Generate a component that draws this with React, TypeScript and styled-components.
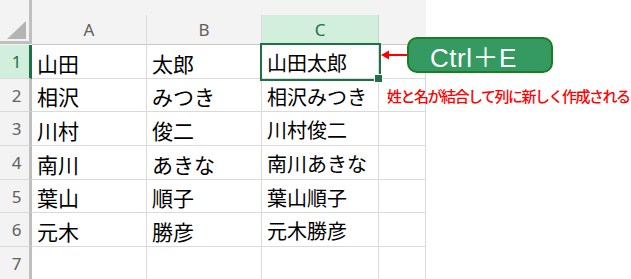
import styled, { createGlobalStyle } from "styled-components";

const GlobalStyle = createGlobalStyle`
    body {
        margin: 0;
        background: #ffffff;
        font-family: "Noto Sans CJK JP", sans-serif;
    }
`

const COLS = "32px 115px 115px 117px 47px"
const GRID = "#dadada"
const HEAD_LINE = "#bfbfbf"
const XL_GREEN = "#1e7145"

const Page = styled.div`
    position: relative;
    width: 631px;
    height: 279px;
    overflow: hidden;
`
const Sheet = styled.div`
    width: 426px;
    display: flex;
    flex-direction: column;
`
const HeaderRow = styled.div`
    display: grid;
    grid-template-columns: ${COLS};
    height: 45px;
    background: #f3f3f3;
`
const Corner = styled.div`
    position: relative;
    box-sizing: border-box;
    border-right: 3px solid ${HEAD_LINE};
    border-bottom: 3px solid ${HEAD_LINE};
    height: 44px;
`
const CornerMark = styled.div`
    position: absolute;
    right: 3px;
    bottom: 2px;
    width: 0;
    height: 0;
    border-left: 19px solid transparent;
    border-bottom: 18px solid #b4b4b4;
`
const ColHeader = styled.div<{ $active?: boolean; $last?: boolean }>`
    align-self: end;
    box-sizing: border-box;
    height: 30px;
    display: flex;
    align-items: center;
    justify-content: center;
    font-family: "Noto Sans", sans-serif;
    font-size: 17px;
    color: ${p => (p.$active ? XL_GREEN : "#5f5f5f")};
    background: ${p => (p.$active ? "#d2eedd" : "transparent")};
    border-right: 1px solid ${p => (p.$last ? "transparent" : p.$active ? "#b6dcc4" : "#dcdcdc")};
    border-bottom: 1px solid #c8c8c8;
`
const Row = styled.div<{ $h: number }>`
    display: grid;
    grid-template-columns: ${COLS};
    height: ${p => p.$h}px;
`
const RowHeader = styled.div<{ $active?: boolean }>`
    box-sizing: border-box;
    display: flex;
    align-items: center;
    justify-content: center;
    padding-left: 4px;
    font-family: "Noto Sans", sans-serif;
    font-size: 17px;
    color: ${p => (p.$active ? XL_GREEN : "#616161")};
    background: ${p => (p.$active ? "#d2eedd" : "#f3f3f3")};
    border-right: 3px solid ${p => (p.$active ? XL_GREEN : HEAD_LINE)};
    border-bottom: 1px solid #dadada;
`
const Cell = styled.div<{ $small?: boolean; $selected?: boolean }>`
    position: relative;
    box-sizing: border-box;
    display: flex;
    align-items: center;
    padding: 2px 0 0 5px;
    font-size: ${p => (p.$small ? 20 : 21)}px;
    color: #000;
    white-space: nowrap;
    border-right: 1px solid ${GRID};
    border-bottom: 1px solid ${GRID};
    ${p => p.$selected && `
        outline: 2px solid ${XL_GREEN};
        outline-offset: 0;
        z-index: 1;
    `}
`
const FillHandle = styled.span`
    position: absolute;
    right: -5px;
    bottom: -5px;
    width: 7px;
    height: 7px;
    background: ${XL_GREEN};
    border: 1px solid #ffffff;
`
const Callout = styled.div`
    position: absolute;
    left: 381px;
    top: 37px;
    display: flex;
    flex-direction: column;
    align-items: flex-start;
    gap: 12px;
`
const KeyLine = styled.div`
    display: flex;
    align-items: center;
`
const KeyBox = styled.div`
    box-sizing: border-box;
    width: 146px;
    height: 36px;
    padding-left: 21px;
    display: flex;
    align-items: center;
    background: #359a62;
    border: 2px solid #1a7f1f;
    border-radius: 10px;
    color: #ffffff;
    font-family: "Liberation Sans", "Noto Sans CJK JP", sans-serif;
    font-size: 26px;
    letter-spacing: 0.5px;
`
const Note = styled.div`
    padding-left: 6px;
    color: #ff0000;
    font-size: 15px;
    font-weight: 500;
    letter-spacing: -1.5px;
    white-space: nowrap;
`

const rows = [
    { h: 34, a: "山田", b: "太郎", c: "山田太郎" },
    { h: 33, a: "相沢", b: "みつき", c: "相沢みつき" },
    { h: 34, a: "川村", b: "俊二", c: "川村俊二" },
    { h: 34, a: "南川", b: "あきな", c: "南川あきな" },
    { h: 33, a: "葉山", b: "順子", c: "葉山順子" },
    { h: 34, a: "元木", b: "勝彦", c: "元木勝彦" },
    { h: 34, a: "", b: "", c: "" },
]

const Arrow = () => (
    <svg width="26" height="12" viewBox="0 0 26 12">
        <line x1="5" y1="6" x2="26" y2="6" stroke="#ff0000" strokeWidth="2" />
        <polygon points="0,6 8,1.5 8,10.5" fill="#ff0000" />
    </svg>
)

export default function App() {
    return (
        <Page>
            <GlobalStyle />
            <Sheet>
                <HeaderRow>
                    <Corner><CornerMark /></Corner>
                    <ColHeader>A</ColHeader>
                    <ColHeader>B</ColHeader>
                    <ColHeader $active>C</ColHeader>
                    <ColHeader $last />
                </HeaderRow>
                {rows.map((r, i) => (
                    <Row key={i} $h={r.h}>
                        <RowHeader $active={i === 0}>{i + 1}</RowHeader>
                        <Cell>{r.a}</Cell>
                        <Cell>{r.b}</Cell>
                        <Cell $small $selected={i === 0}>
                            {r.c}
                            {i === 0 && <FillHandle />}
                        </Cell>
                        <Cell />
                    </Row>
                ))}
            </Sheet>
            <Callout>
                <KeyLine>
                    <Arrow />
                    <KeyBox>Ctrl＋E</KeyBox>
                </KeyLine>
                <Note>姓と名が結合して列に新しく作成される</Note>
            </Callout>
        </Page>
    )
}
